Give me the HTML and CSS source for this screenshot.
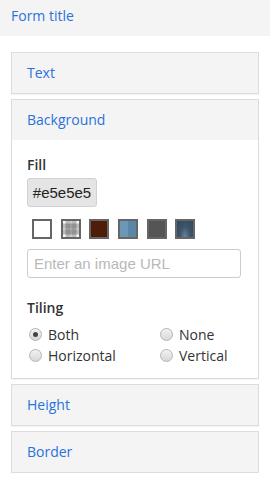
FILE: index.html
```html
<!DOCTYPE html>
<html>
<head>
<meta charset="utf-8">
<link rel="stylesheet" href="styles.css">
</head>
<body>
<div class="title-bar">Form title</div>
<div class="panels">
  <div class="panel">
    <div class="panel-head">Text</div>
  </div>
  <div class="panel">
    <div class="panel-head">Background</div>
    <div class="panel-body">
      <div class="label">Fill</div>
      <button class="color-btn">#e5e5e5</button>
      <div class="swatches">
        <span class="swatch sw-white"></span>
        <span class="swatch sw-plaid"></span>
        <span class="swatch sw-brown"></span>
        <span class="swatch sw-steel"></span>
        <span class="swatch sw-gray"></span>
        <span class="swatch sw-navy"></span>
      </div>
      <input class="url-input" type="text" placeholder="Enter an image URL">
      <div class="label tiling">Tiling</div>
      <div class="radios">
        <label class="radio"><span class="dot checked"></span>Both</label>
        <label class="radio"><span class="dot"></span>None</label>
        <label class="radio"><span class="dot"></span>Horizontal</label>
        <label class="radio"><span class="dot"></span>Vertical</label>
      </div>
    </div>
  </div>
  <div class="panel">
    <div class="panel-head">Height</div>
  </div>
  <div class="panel">
    <div class="panel-head">Border</div>
  </div>
</div>
</body>
</html>
```

FILE: styles.css
```css
* { box-sizing: border-box; }
html, body { margin: 0; padding: 0; background: #fff; }
body {
  font-family: "Open Sans", "DejaVu Sans", sans-serif;
  font-size: 14px;
  color: #333;
  width: 270px;
}
.title-bar {
  height: 36px;
  background: #f4f4f4;
  color: #2a72dc;
  padding: 6px 11px 0;
  line-height: 20px;
}
.panels {
  padding: 16px 11px 0;
  display: flex;
  flex-direction: column;
  gap: 5px;
}
.panel {
  border: 1px solid #dcdcdc;
  box-shadow: 0 1px 1px rgba(0,0,0,0.04);
  background: #fff;
}
.panel-head {
  height: 40px;
  background: #f4f4f4;
  color: #2a72dc;
  padding: 10px 15px 0;
  line-height: 20px;
}
.panel-body {
  padding: 15px 15px 12px;
}
.label {
  font-weight: 600;
  line-height: 20px;
  color: #333;
}
.color-btn {
  display: block;
  margin-top: 3px;
  width: 70px;
  height: 29px;
  padding: 0;
  background: #e5e5e5;
  border: 1px solid #d2d2d2;
  border-radius: 3px;
  font-family: "Liberation Sans", Arial, sans-serif;
  font-size: 15px;
  color: #222;
}
.swatches {
  display: flex;
  gap: 8.7px;
  margin-top: 12px;
  padding-left: 5px;
}
.swatch {
  width: 20px;
  height: 20px;
  border: 2px solid #666;
  display: block;
}
.sw-white { background: #fff; }
.sw-plaid {
  background-color: #fafafa;
  background-image:
    linear-gradient(90deg, transparent 0 2px, rgba(70,70,70,0.35) 3px 7px, rgba(70,70,70,0.15) 8px, rgba(70,70,70,0.35) 9px 13px, transparent 14px),
    linear-gradient(0deg, transparent 0 2px, rgba(70,70,70,0.35) 3px 7px, rgba(70,70,70,0.15) 8px, rgba(70,70,70,0.35) 9px 13px, transparent 14px);
}
.sw-brown { background: #4e1c07; }
.sw-steel { background: linear-gradient(90deg, #6b98b6 0 50%, #5a87a5 50% 100%); }
.sw-gray { background: #555; }
.sw-navy { background: radial-gradient(ellipse at 50% 100%, #6b849a 0, #3d566c 45%, #2f475d 100%); }
.url-input {
  display: block;
  margin-top: 10px;
  width: 214px;
  height: 29px;
  border: 1px solid #ccc;
  border-radius: 3px;
  padding: 0 6px;
  font-family: "Liberation Sans", Arial, sans-serif;
  font-size: 15px;
  color: #333;
  outline: none;
}
.url-input::placeholder { color: #b8b8b8; }
.tiling { margin-top: 20px; }
.radios {
  margin-top: 6px;
  display: grid;
  grid-template-columns: 131px auto;
  grid-auto-rows: 21px;
}
.radio {
  display: flex;
  align-items: center;
  line-height: 21px;
  color: #333;
}
.dot {
  width: 13px;
  height: 13px;
  border-radius: 50%;
  border: 1px solid #b5b5b5;
  background: linear-gradient(#f2f2f2, #d8d8d8);
  margin: 0 6px 0 2px;
  position: relative;
  flex: none;
}
.dot.checked::after {
  content: "";
  position: absolute;
  left: 3px;
  top: 3px;
  width: 5px;
  height: 5px;
  border-radius: 50%;
  background: #444;
}
```
